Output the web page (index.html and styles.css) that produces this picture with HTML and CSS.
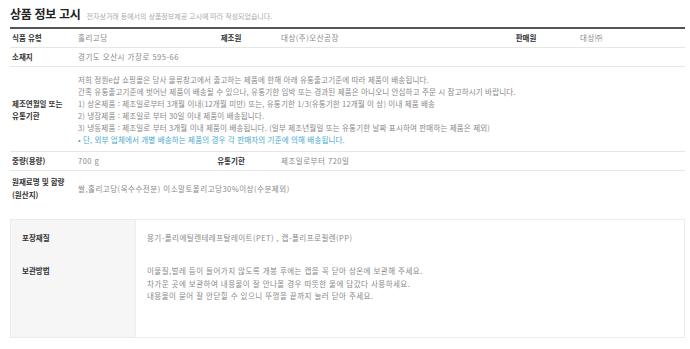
FILE: index.html
```html
<!DOCTYPE html>
<html lang="ko">
<head>
<meta charset="utf-8">
<link rel="stylesheet" href="styles.css">
</head>
<body>
<div class="page">
  <div class="head">
    <h2 class="title">상품 정보 고시</h2>
    <span class="sub">전자상거래 등에서의 상품정보제공 고시에 따라 작성되었습니다.</span>
  </div>
  <div class="info">
    <div class="row">
      <div class="lab">식품 유형</div>
      <div class="val v1">홀리고당</div>
      <div class="lab c">제조원</div>
      <div class="val v2">대상(주)오산공장</div>
      <div class="lab c c5">판매원</div>
      <div class="val v3">대상㈜</div>
    </div>
    <div class="row">
      <div class="lab">소재지</div>
      <div class="val wide">경기도 오산시 가장로 595-66</div>
    </div>
    <div class="row tall">
      <div class="lab mid">제조연월일 또는<br>유통기한</div>
      <div class="val wide long">
        저희 정원e샵 쇼핑몰은 당사 물류창고에서 출고하는 제품에 한해 아래 유통출고기준에 따라 제품이 배송됩니다.<br>
        간혹 유통출고기준에 벗어난 제품이 배송될 수 있으나, 유통기한 임박 또는 경과된 제품은 아니오니 안심하고 주문 시 참고하시기 바랍니다.<br>
        1) 상온제품 : 제조일로부터 3개월 이내(12개월 미만) 또는, 유통기한 1/3(유통기한 12개월 이 상) 이내 제품 배송<br>
        2) 냉장제품 : 제조일로 부터 30일 이내 제품이 배송됩니다.<br>
        3) 냉동제품 : 제조일로 부터 3개월 이내 제품이 배송됩니다. (일부 제조년월일 또는 유통기한 날짜 표시하여 판매하는 제품은 제외)<br>
        <span class="note">• 단, 외부 업체에서 개별 배송하는 제품의 경우 각 판매자의 기준에 의해 배송됩니다.</span>
      </div>
    </div>
    <div class="row">
      <div class="lab">중량(용량)</div>
      <div class="val v1">700 g</div>
      <div class="lab c">유통기한</div>
      <div class="val v2 rest">제조일로부터 720일</div>
    </div>
    <div class="row last">
      <div class="lab mid">원재료명 및 함량<br>(원산지)</div>
      <div class="val wide">쌀,홀리고당(옥수수전분) 이소말토올리고당30%이상(수분제외)</div>
    </div>
  </div>
  <div class="box">
    <div class="bl">포장재질</div>
    <div class="bv">용기-폴리에틸렌테레프탈레이트(PET) , 캡-폴리프로필렌(PP)</div>
    <div class="bl">보관방법</div>
    <div class="bv">이물질,벌레 등이 들어가지 않도록 개봉 후에는 캡을 꼭 닫아 상온에 보관해 주세요.<br>차가운 곳에 보관하여 내용물이 잘 안나올 경우 따뜻한 물에 담갔다 사용하세요.<br>내용물이 묻어 잘 안닫힐 수 있으니 뚜껑을 끝까지 눌러 닫아 주세요.</div>
  </div>
</div>
</body>
</html>
```

FILE: styles.css
```css
* { box-sizing: border-box; margin: 0; padding: 0; }
body {
  margin: 0;
  background: #fff;
  font-family: "Noto Sans CJK KR", "Noto Sans", sans-serif;
  color: #888;
}
.page { padding: 6px 5px 0 10px; width: 690px; }
.head { display: flex; align-items: baseline; gap: 6px; height: 21px; }
.title { font-size: 12px; font-weight: 700; color: #222; letter-spacing: -0.3px; line-height: 16px; }
.sub { font-size: 7px; color: #aaa; letter-spacing: 0; }
.info { border-top: 2px solid #555; }
.row {
  display: grid;
  grid-template-columns: 68px 112px 82px 220px 68px 1fr;
  border-bottom: 1px solid #e6e6e6;
  font-size: 7.5px;
  line-height: 12px;
  padding: 3px 0;
  align-items: center;
}
.row.tall { padding: 7px 0 5px; }
.row.last { border-bottom: none; padding: 4px 0; line-height: 13px; }
.lab { font-weight: 700; color: #333; padding-left: 2px; }
.lab.c { text-align: center; padding-left: 0; }
.val { color: #888; letter-spacing: 0.5px; }
.val.long { letter-spacing: 0.15px; }
.v2 { padding-left: 9px; }
.v3 { padding-left: 20px; }
.rest { grid-column: 4 / 7; }
.wide { grid-column: 2 / 7; }
.note { color: #46a9cf; }
.box {
  margin-top: 14px;
  border: 1px solid #ececec;
  display: grid;
  grid-template-columns: 125px 1fr;
  grid-template-rows: 33px 84px;
  font-size: 7.5px;
  line-height: 12.5px;
}
.bl { background: #f6f6f6; border-right: 1px solid #eee; color: #333; font-weight: 700; padding: 12px 0 0 11px; }
.bv { color: #888; padding: 12px 0 0 11px; letter-spacing: 0.45px; }
```
